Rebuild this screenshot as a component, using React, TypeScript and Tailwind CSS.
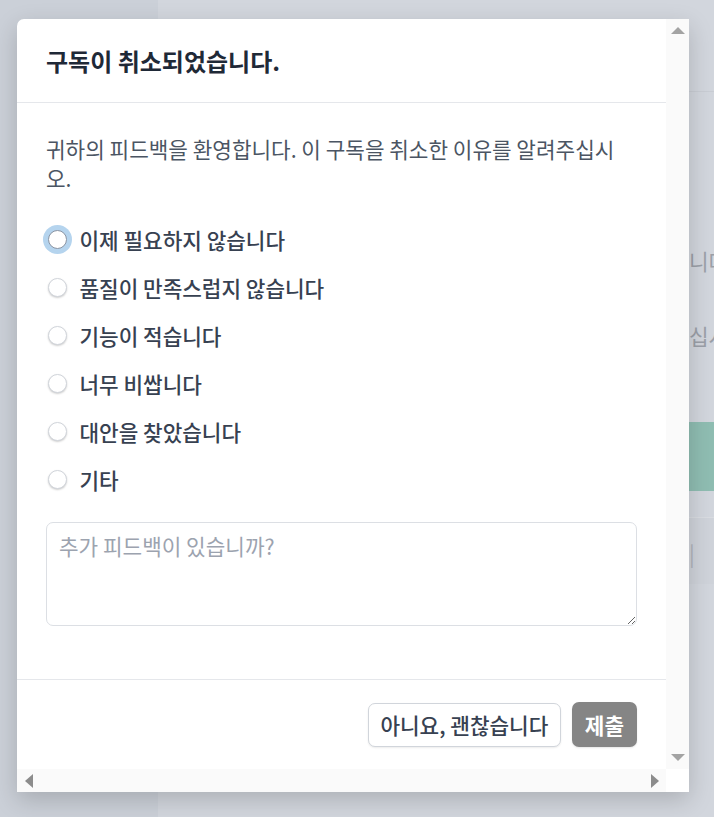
import React from "react";

const options = [
  "이제 필요하지 않습니다",
  "품질이 만족스럽지 않습니다",
  "기능이 적습니다",
  "너무 비쌉니다",
  "대안을 찾았습니다",
  "기타",
];

export default function App() {
  return (
    <div className="relative w-[714px] h-[817px] overflow-hidden bg-[#d2d6dd] font-['Noto_Sans_CJK_KR',sans-serif] flex">
      {/* background page */}
      <div className="w-[158px] shrink-0 h-full bg-[#cbd0d8]" />
      <div className="flex-1 min-w-0 flex flex-col overflow-hidden">
        <div className="h-[92px] shrink-0 border-b border-[#c9cdd4]" />
        <div className="pl-[531px] flex flex-col text-[21.3px] leading-[29px] text-[#9ba0a8] whitespace-nowrap overflow-hidden">
          <div className="mt-[154px]">니다</div>
          <div className="mt-[46px]">십시오</div>
          <div className="mt-[72px] h-[69px] bg-[#8fbdb2]" />
          <div className="mt-[26px] h-[67px] border-t border-[#d9dce1] bg-[#cfd3da] pt-[20px] text-[#b0b4bb]">|</div>
        </div>
      </div>

      {/* modal */}
      <div className="absolute left-[17px] top-[19px] w-[672px] h-[773px] bg-white rounded-tl-[7px] shadow-[0_8px_24px_rgba(0,0,0,0.18)] overflow-hidden flex flex-col">
        <div className="flex flex-1 min-h-0">
          <div className="w-[649px] flex flex-col overflow-hidden">
            <div className="h-[84px] shrink-0 border-b border-[#e5e7eb] px-[29px] flex items-center">
              <h2 className="text-[24px] font-bold text-[#1f2937] leading-[30px]">구독이 취소되었습니다.</h2>
            </div>
            <div className="px-[29px] pt-[31px] pb-[53px] flex flex-col">
              <p className="text-[21.3px] leading-[29px] text-[#4b5563] max-w-[578px]">
                귀하의 피드백을 환영합니다. 이 구독을 취소한 이유를 알려주십시오.
              </p>
              <div className="mt-[33px] flex flex-col gap-[19px]">
                {options.map((o, i) => (
                  <label key={o} className="flex items-center h-[29px]">
                    <span
                      className={
                        i === 0
                          ? "ml-[1.5px] w-[19.5px] h-[19.5px] shrink-0 rounded-full border border-[#8a94a3] bg-white ring-[5px] ring-[#b5d4ee] shadow-[0_1px_2px_rgba(0,0,0,0.2)]"
                          : "ml-[1.5px] w-[19.5px] h-[19.5px] shrink-0 rounded-full border border-[#d1d5db] bg-white shadow-[0_1px_2px_rgba(0,0,0,0.2)]"
                      }
                    />
                    <span className="ml-[12.5px] text-[21.3px] font-medium text-[#374151] leading-[29px]">{o}</span>
                  </label>
                ))}
              </div>
              <textarea
                placeholder="추가 피드백이 있습니까?"
                className="mt-[28px] h-[104px] w-[591px] rounded-[7px] border border-[#dcdfe4] px-[12px] py-[8px] text-[21.3px] leading-[29px] text-[#374151] placeholder:text-[#9ca3af] outline-none"
              />
            </div>
            <div className="h-[90px] shrink-0 border-t border-[#e5e7eb] px-[29px] flex items-center justify-end gap-[11px]">
              <button className="h-[44px] px-[11.5px] rounded-[7px] border border-[#d1d5db] bg-white shadow-[0_1px_2px_rgba(0,0,0,0.08)] text-[21.3px] font-medium text-[#374151] whitespace-nowrap">
                아니요, 괜찮습니다
              </button>
              <button className="h-[45px] px-[13px] rounded-[7px] bg-[#858585] text-[21.3px] font-bold text-white shadow-[0_1px_2px_rgba(0,0,0,0.1)] whitespace-nowrap">
                제출
              </button>
            </div>
          </div>
          <div className="w-[23px] bg-[#fafafa] flex flex-col justify-between">
            <div className="h-[23px] flex items-center justify-center">
              <div className="w-0 h-0 border-x-[7.5px] border-x-transparent border-b-[7px] border-b-[#a3a3a3]" />
            </div>
            <div className="h-[23px] flex items-center justify-center">
              <div className="w-0 h-0 border-x-[7.5px] border-x-transparent border-t-[7px] border-t-[#a3a3a3]" />
            </div>
          </div>
        </div>
        <div className="h-[23px] shrink-0 flex">
          <div className="w-[649px] bg-[#fafafa] flex items-center justify-between">
            <div className="w-[23px] h-[23px] flex items-center justify-center">
              <div className="w-0 h-0 border-y-[7.5px] border-y-transparent border-r-[8px] border-r-[#8c8c8c]" />
            </div>
            <div className="w-[23px] h-[23px] flex items-center justify-center">
              <div className="w-0 h-0 border-y-[7.5px] border-y-transparent border-l-[8px] border-l-[#8c8c8c]" />
            </div>
          </div>
          <div className="w-[23px] bg-white" />
        </div>
      </div>
    </div>
  );
}
